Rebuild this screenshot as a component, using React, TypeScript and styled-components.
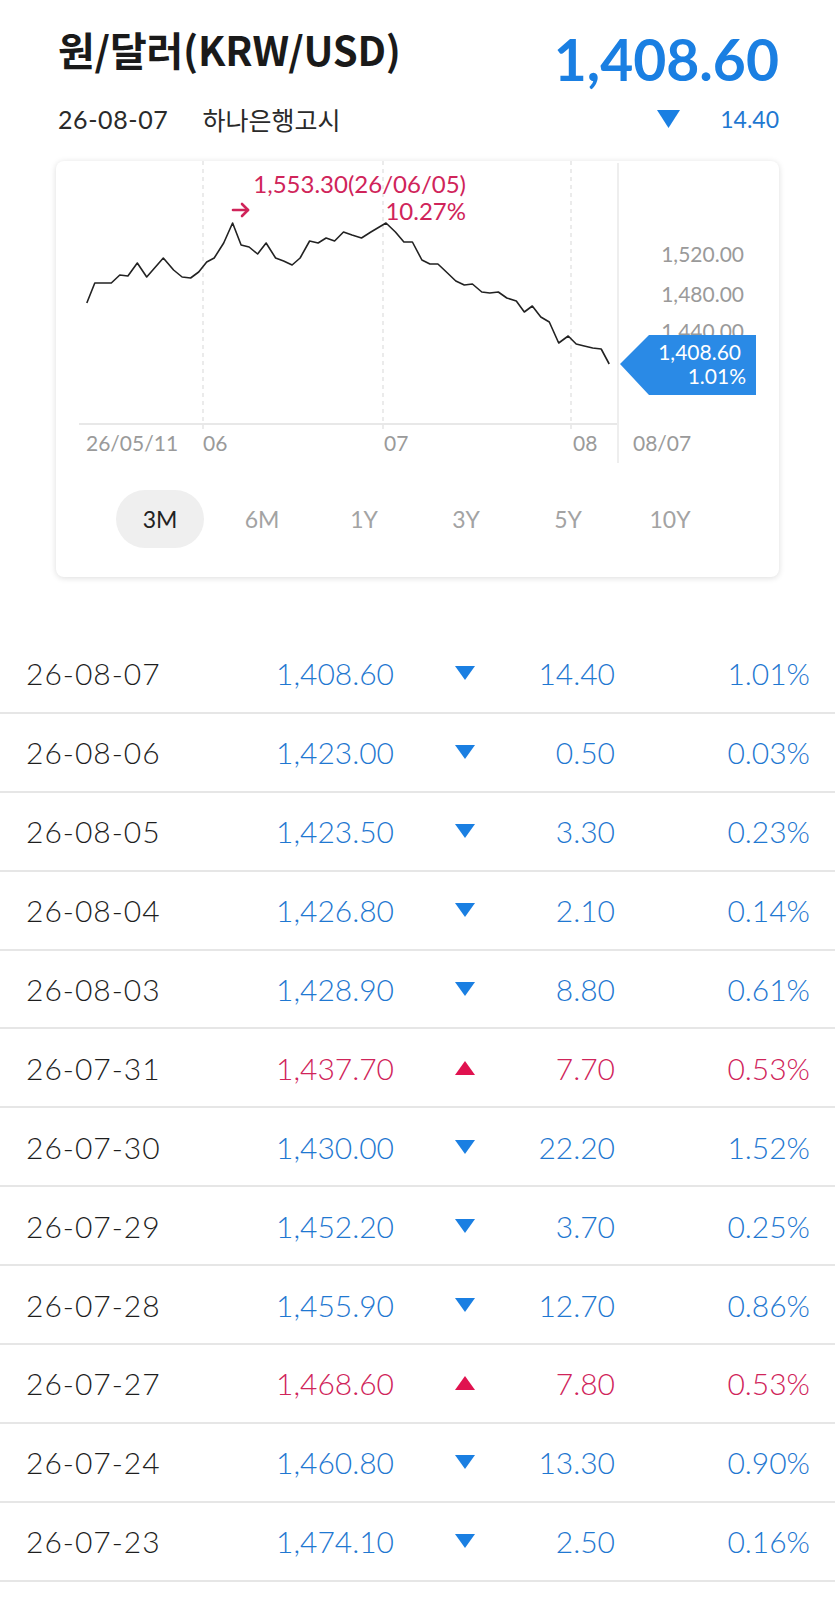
import React from 'react';
import styled, { createGlobalStyle } from 'styled-components';

const GlobalStyle = createGlobalStyle`
  html, body {
    margin: 0;
    padding: 0;
    background: #ffffff;
  }
  body {
    font-family: Lato, "Noto Sans CJK KR", sans-serif;
    color: #222;
  }
`;

const BLUE = '#1f78d1';
const BRIGHT_BLUE = '#1a7fe2';
const RED = '#d0245a';
const GRAY = '#9a9a9a';

const Page = styled.div`
  width: 835px;
  background: #fff;
`;

const Header = styled.header`
  padding: 24px 56px 0 58px;
`;

const TitleRow = styled.div`
  display: flex;
  justify-content: space-between;
  align-items: flex-start;
`;

const Title = styled.h1`
  margin: 0;
  font-family: "Noto Sans CJK KR", "Noto Sans", sans-serif;
  font-weight: 700;
  font-size: 40px;
  line-height: 50px;
  letter-spacing: -0.2px;
  color: #1a1a1a;
`;

const BigPrice = styled.div`
  margin-top: 5px;
  font-family: Lato, sans-serif;
  font-weight: 700;
  font-size: 57px;
  line-height: 60px;
  color: ${BRIGHT_BLUE};
`;

const SubRow = styled.div`
  display: flex;
  justify-content: space-between;
  align-items: center;
  height: 60px;
`;

const SubInfo = styled.div`
  display: flex;
  align-items: center;
  gap: 34px;
  font-size: 25px;
  color: #2a2a2a;
`;

const SubDate = styled.span`
  font-family: Lato, sans-serif;
  letter-spacing: 0.6px;
`;

const SubSource = styled.span`
  font-family: "Noto Sans CJK KR", sans-serif;
`;

const ChangeBox = styled.div`
  display: flex;
  align-items: center;
  gap: 40px;
  font-family: Lato, sans-serif;
  font-size: 23px;
  color: ${BLUE};
`;

const Card = styled.section`
  margin: 12px 56px 0 56px;
  background: #fff;
  border-radius: 8px;
  box-shadow: 0 1px 6px rgba(0, 0, 0, 0.14);
  padding-bottom: 29px;
`;

const ChartSvg = styled.svg`
  display: block;
  font-family: Lato, sans-serif;
`;

const Tabs = styled.div`
  display: flex;
  gap: 14px;
  margin-top: 27px;
  padding-left: 60px;
`;

const Tab = styled.button<{ $active?: boolean }>`
  width: 88px;
  height: 58px;
  border: none;
  border-radius: 29px;
  padding: 0;
  font-family: Lato, sans-serif;
  font-size: 23px;
  color: ${(p) => (p.$active ? '#222' : '#a3a3a3')};
  background: ${(p) => (p.$active ? '#efefef' : 'transparent')};
`;

const Table = styled.div`
  margin-top: 58px;
`;

const Row = styled.div`
  display: grid;
  grid-template-columns: 1fr 160px 142px 79px 195px;
  align-items: center;
  height: 76.9px;
  padding: 0 25px 0 26px;
  border-bottom: 2px solid #e6e6e6;
  font-family: Lato, sans-serif;
  font-weight: 300;
  font-size: 30px;
`;

const DateCell = styled.span`
  color: #1e1e1e;
  letter-spacing: 1px;
`;

const NumCell = styled.span<{ $up: boolean }>`
  text-align: right;
  white-space: nowrap;
  color: ${(p) => (p.$up ? RED : BLUE)};
`;

const ArrowCell = styled.span`
  display: flex;
  justify-content: center;
`;

const Triangle = ({ up, w, h, color }: { up: boolean; w: number; h: number; color: string }) => (
  <svg width={w} height={h} viewBox={`0 0 ${w} ${h}`}>
    {up ? (
      <polygon points={`${w / 2},0 ${w},${h} 0,${h}`} fill={color} />
    ) : (
      <polygon points={`0,0 ${w},0 ${w / 2},${h}`} fill={color} />
    )}
  </svg>
);

// line points in page coordinates
const linePts: [number, number][] = [
  [86.8, 303], [94.8, 283], [111.3, 283], [119.8, 275], [127.9, 276], [137.3, 263],
  [146.7, 277], [163.3, 258], [173.6, 270], [182.1, 277], [190.6, 278], [198.7, 272],
  [206.7, 262], [214.2, 258], [223.7, 243], [232.6, 223], [241.1, 245], [249.1, 247],
  [257.6, 254], [266.1, 243], [275.6, 258], [283.6, 261], [292.1, 265], [300.1, 258],
  [309.6, 241], [318.1, 243], [326.1, 238], [334.6, 241], [343.5, 232], [352.0, 235],
  [361.5, 238], [370.9, 232], [386.0, 223], [395.4, 232], [403.9, 242], [412.4, 242],
  [421.9, 260], [429.9, 264], [437.9, 264], [446.4, 272], [455.8, 281], [464.3, 285],
  [472.4, 284], [481.8, 292], [489.8, 293], [498.3, 292], [506.8, 298], [516.3, 301],
  [524.3, 312], [532.3, 306], [540.8, 317], [549.3, 322], [558.7, 343], [568.2, 336],
  [576.2, 344], [584.2, 346], [592.7, 348], [601.2, 349], [609.2, 364],
];

const Chart = () => {
  const pts = linePts.map(([x, y]) => `${(x - 56).toFixed(1)},${y - 161}`).join(' ');
  return (
    <ChartSvg width={723} height={302} viewBox="0 0 723 302">
      {[147, 327, 515].map((x) => (
        <line key={x} x1={x} y1={0} x2={x} y2={272} stroke="#dedede" strokeWidth={1.2} strokeDasharray="4 4" />
      ))}
      <line x1={23} y1={263} x2={562} y2={263} stroke="#e8e8e8" strokeWidth={2} />
      <line x1={562} y1={2} x2={562} y2={302} stroke="#eeeeee" strokeWidth={2} />

      <g fill={GRAY} fontSize={21}>
        <text x={30} y={290}>26/05/11</text>
        <text x={147} y={290}>06</text>
        <text x={328} y={290}>07</text>
        <text x={517} y={290}>08</text>
        <text x={577} y={290}>08/07</text>
      </g>
      <g fill={GRAY} fontSize={21} textAnchor="end">
        <text x={688} y={101}>1,520.00</text>
        <text x={688} y={141}>1,480.00</text>
        <text x={688} y={178}>1,440.00</text>
      </g>

      <polyline points={pts} fill="none" stroke="#222" strokeWidth={1.6} strokeLinejoin="round" />

      <polygon points="564,203 593,174 700,174 700,234 593,234" fill="#2a8ae6" />
      <g fill="#fff" fontSize={21} textAnchor="end">
        <text x={685} y={199}>1,408.60</text>
        <text x={690} y={223}>1.01%</text>
      </g>

      <g fill={RED} fontSize={24} textAnchor="end">
        <text x={410} y={32}>1,553.30(26/06/05)</text>
        <text x={410} y={59}>10.27%</text>
      </g>
      <g stroke={RED} strokeWidth={2.6} fill="none" strokeLinecap="round" strokeLinejoin="round">
        <line x1={177} y1={49} x2={192} y2={49} />
        <polyline points="186,43 192,49 186,55" />
      </g>
    </ChartSvg>
  );
};

const rows: [string, string, boolean, string, string][] = [
  ['26-08-07', '1,408.60', false, '14.40', '1.01%'],
  ['26-08-06', '1,423.00', false, '0.50', '0.03%'],
  ['26-08-05', '1,423.50', false, '3.30', '0.23%'],
  ['26-08-04', '1,426.80', false, '2.10', '0.14%'],
  ['26-08-03', '1,428.90', false, '8.80', '0.61%'],
  ['26-07-31', '1,437.70', true, '7.70', '0.53%'],
  ['26-07-30', '1,430.00', false, '22.20', '1.52%'],
  ['26-07-29', '1,452.20', false, '3.70', '0.25%'],
  ['26-07-28', '1,455.90', false, '12.70', '0.86%'],
  ['26-07-27', '1,468.60', true, '7.80', '0.53%'],
  ['26-07-24', '1,460.80', false, '13.30', '0.90%'],
  ['26-07-23', '1,474.10', false, '2.50', '0.16%'],
];

const tabs = ['3M', '6M', '1Y', '3Y', '5Y', '10Y'];

export default function App() {
  return (
    <Page>
      <GlobalStyle />
      <Header>
        <TitleRow>
          <Title>원/달러(KRW/USD)</Title>
          <BigPrice>1,408.60</BigPrice>
        </TitleRow>
        <SubRow>
          <SubInfo>
            <SubDate>26-08-07</SubDate>
            <SubSource>하나은행고시</SubSource>
          </SubInfo>
          <ChangeBox>
            <Triangle up={false} w={23} h={18} color={BRIGHT_BLUE} />
            <span>14.40</span>
          </ChangeBox>
        </SubRow>
      </Header>

      <Card>
        <Chart />
        <Tabs>
          {tabs.map((t, i) => (
            <Tab key={t} $active={i === 0}>{t}</Tab>
          ))}
        </Tabs>
      </Card>

      <Table>
        {rows.map(([d, price, up, chg, pct]) => (
          <Row key={d}>
            <DateCell>{d}</DateCell>
            <NumCell $up={up}>{price}</NumCell>
            <ArrowCell>
              <Triangle up={up} w={20} h={14} color={up ? '#e0124f' : BRIGHT_BLUE} />
            </ArrowCell>
            <NumCell $up={up}>{chg}</NumCell>
            <NumCell $up={up}>{pct}</NumCell>
          </Row>
        ))}
      </Table>
    </Page>
  );
}
